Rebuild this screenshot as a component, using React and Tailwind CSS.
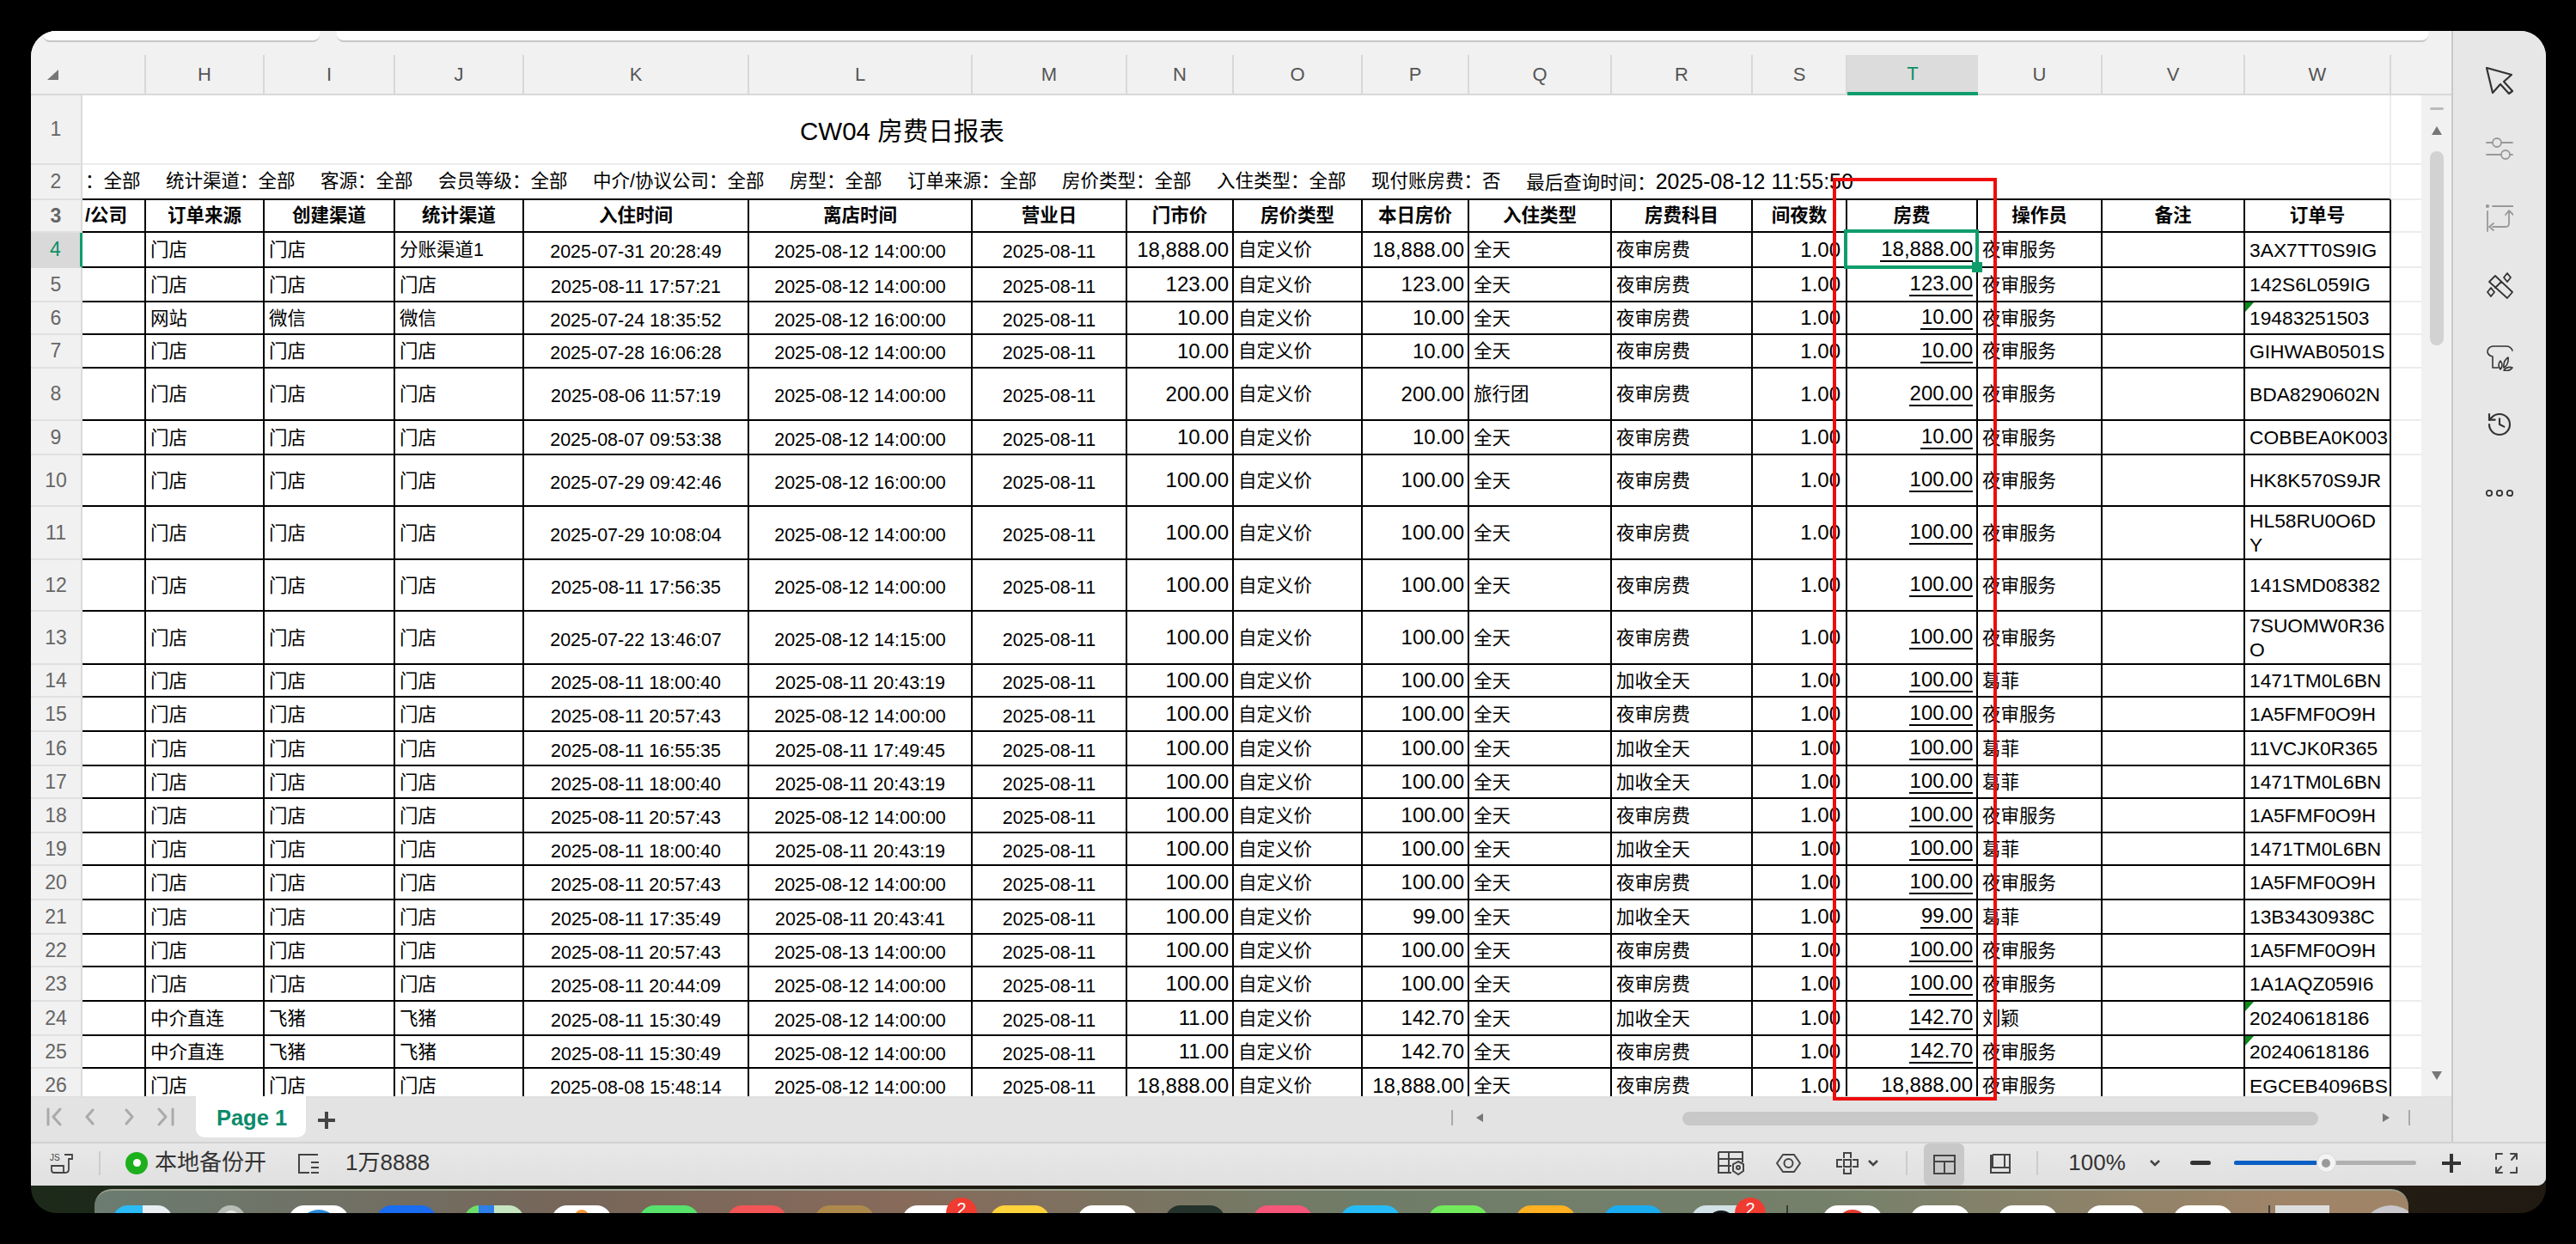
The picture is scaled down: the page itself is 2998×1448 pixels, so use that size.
import React from 'react';
import { History } from 'lucide-react';

const COLS = 'grid grid-cols-[60px_74px_138px_152px_150px_262px_260px_180px_124px_150px_124px_166px_164px_110px_152px_145px_166px_170px_35px]';
const LETTERS = ['H', 'I', 'J', 'K', 'L', 'M', 'N', 'O', 'P', 'Q', 'R', 'S', 'T', 'U', 'V', 'W'];
const TITLES = ['订单来源', '创建渠道', '统计渠道', '入住时间', '离店时间', '营业日', '门市价', '房价类型', '本日房价', '入住类型', '房费科目', '间夜数', '房费', '操作员', '备注', '订单号'];

const FILTERS = ['统计渠道：全部', '客源：全部', '会员等级：全部', '中介/协议公司：全部', '房型：全部', '订单来源：全部', '房价类型：全部', '入住类型：全部', '现付账房费：否'];

const NIGHT = ['全天', '夜审房费', '夜审服务'];
const EXTRA = ['全天', '加收全天', '葛菲'];
const SHOP = ['门店', '门店', '门店'];

// n, height, [source, created, channel], in, out, market, day, [stay, item, operator], order no, flagged
const ROWS = [
  [4, 'h-[41px]', ['门店', '门店', '分账渠道1'], '2025-07-31 20:28:49', '2025-08-12 14:00:00', '18,888.00', '18,888.00', NIGHT, '3AX7TT0S9IG'],
  [5, 'h-[40px]', SHOP, '2025-08-11 17:57:21', '2025-08-12 14:00:00', '123.00', '123.00', NIGHT, '142S6L059IG'],
  [6, 'h-[38px]', ['网站', '微信', '微信'], '2025-07-24 18:35:52', '2025-08-12 16:00:00', '10.00', '10.00', NIGHT, '19483251503', true],
  [7, 'h-[39px]', SHOP, '2025-07-28 16:06:28', '2025-08-12 14:00:00', '10.00', '10.00', NIGHT, 'GIHWAB0501S'],
  [8, 'h-[61px]', SHOP, '2025-08-06 11:57:19', '2025-08-12 14:00:00', '200.00', '200.00', ['旅行团', '夜审房费', '夜审服务'], 'BDA8290602N'],
  [9, 'h-[40px]', SHOP, '2025-08-07 09:53:38', '2025-08-12 14:00:00', '10.00', '10.00', NIGHT, 'COBBEA0K003'],
  [10, 'h-[60px]', SHOP, '2025-07-29 09:42:46', '2025-08-12 16:00:00', '100.00', '100.00', NIGHT, 'HK8K570S9JR'],
  [11, 'h-[62px]', SHOP, '2025-07-29 10:08:04', '2025-08-12 14:00:00', '100.00', '100.00', NIGHT, 'HL58RU0O6D\nY'],
  [12, 'h-[60px]', SHOP, '2025-08-11 17:56:35', '2025-08-12 14:00:00', '100.00', '100.00', NIGHT, '141SMD08382'],
  [13, 'h-[62px]', SHOP, '2025-07-22 13:46:07', '2025-08-12 14:15:00', '100.00', '100.00', NIGHT, '7SUOMW0R36\nO'],
  [14, 'h-[38px]', SHOP, '2025-08-11 18:00:40', '2025-08-11 20:43:19', '100.00', '100.00', EXTRA, '1471TM0L6BN'],
  [15, 'h-[40px]', SHOP, '2025-08-11 20:57:43', '2025-08-12 14:00:00', '100.00', '100.00', NIGHT, '1A5FMF0O9H'],
  [16, 'h-[40px]', SHOP, '2025-08-11 16:55:35', '2025-08-11 17:49:45', '100.00', '100.00', EXTRA, '11VCJK0R365'],
  [17, 'h-[38px]', SHOP, '2025-08-11 18:00:40', '2025-08-11 20:43:19', '100.00', '100.00', EXTRA, '1471TM0L6BN'],
  [18, 'h-[40px]', SHOP, '2025-08-11 20:57:43', '2025-08-12 14:00:00', '100.00', '100.00', NIGHT, '1A5FMF0O9H'],
  [19, 'h-[38px]', SHOP, '2025-08-11 18:00:40', '2025-08-11 20:43:19', '100.00', '100.00', EXTRA, '1471TM0L6BN'],
  [20, 'h-[40px]', SHOP, '2025-08-11 20:57:43', '2025-08-12 14:00:00', '100.00', '100.00', NIGHT, '1A5FMF0O9H'],
  [21, 'h-[40px]', SHOP, '2025-08-11 17:35:49', '2025-08-11 20:43:41', '100.00', '99.00', EXTRA, '13B3430938C'],
  [22, 'h-[38px]', SHOP, '2025-08-11 20:57:43', '2025-08-13 14:00:00', '100.00', '100.00', NIGHT, '1A5FMF0O9H'],
  [23, 'h-[40px]', SHOP, '2025-08-11 20:44:09', '2025-08-12 14:00:00', '100.00', '100.00', NIGHT, '1A1AQZ059I6'],
  [24, 'h-[40px]', ['中介直连', '飞猪', '飞猪'], '2025-08-11 15:30:49', '2025-08-12 14:00:00', '11.00', '142.70', ['全天', '加收全天', '刘颖'], '20240618186', true],
  [25, 'h-[38px]', ['中介直连', '飞猪', '飞猪'], '2025-08-11 15:30:49', '2025-08-12 14:00:00', '11.00', '142.70', NIGHT, '20240618186', true],
  [26, 'h-[41px]', SHOP, '2025-08-08 15:48:14', '2025-08-12 14:00:00', '18,888.00', '18,888.00', NIGHT, 'EGCEB4096BS'],
];

const DOCK = [
  ['w-[70px] bg-[linear-gradient(90deg,#2bbcf7_50%,#e8eef2_50%)]'],
  ['w-[35px] mx-[18px] bg-[#b9bdb8] rounded-t-full', 'bg-[#e5e5e0] w-[20px] h-[20px] mt-[6px]'],
  ['w-[70px] bg-white', 'bg-[#2a8ad8] w-[46px] h-[46px] mt-[5px]'],
  ['w-[70px] bg-[#1a6cf0]'],
  ['w-[70px] bg-[linear-gradient(90deg,#6fdc6a_25%,#2f7fe8_25%,#2f7fe8_50%,#c6e4c0_50%)]'],
  ['w-[70px] bg-white', 'bg-[#f29a3c] w-[16px] h-[30px] mt-[5px]'],
  ['w-[70px] bg-[#57e26c]'],
  ['w-[70px] bg-[#f25555]'],
  ['w-[70px] bg-[#ad8a4c]'],
  ['w-[70px] bg-white'],
  ['w-[70px] bg-[#fdd33c]'],
  ['w-[70px] bg-white'],
  ['w-[70px] bg-[#24322c]'],
  ['w-[70px] bg-[#f5567a]'],
  ['w-[70px] bg-[#27bcf8]'],
  ['w-[70px] bg-[#72ea5c]'],
  ['w-[70px] bg-[#fdb022]'],
  ['w-[70px] bg-[#1cacf0]'],
  ['w-[70px] bg-[#d3e2e6]', 'bg-[#14181a] w-[34px] h-[34px] mt-[6px]'],
];
const DOCK_RIGHT = [
  ['bg-white', 'bg-[#e23b30] w-[36px] h-[36px] mt-[5px]'],
  ['bg-white'],
  ['bg-white'],
  ['bg-white'],
  ['bg-white'],
];

const cell = 'flex items-center border-r-2 border-b-2 border-black overflow-hidden whitespace-nowrap';
const left = `${cell} pl-[5px] pt-[1px] leading-[24px]`;
const center = `${cell} justify-center pt-[5px] leading-[22px]`;
const right = `${cell} justify-end pr-[4px] text-[24px] leading-[24px]`;
const nights = `${cell} justify-end pr-[6px] text-[24px] leading-[24px]`;

const RowHead = ({ n, active, className = '' }) => (
  <div className={`flex items-center justify-center border-b-2 text-[23px] ${active ? 'bg-[#d9d9d9] border-[#d9d9d9] border-r-[3px] border-r-[#0f9d6b] text-[#0f8f68]' : 'bg-[#f1f1f1] border-[#e0e0e0] border-r-2 border-r-[#dadada] text-[#666]'} ${className}`}>
    {n}
  </div>
);

const Row = ({ data }) => {
  const [n, h, [src, created, channel], inTime, outTime, market, day, [stay, item, operator], order, flag] = data;
  return (
    <div className={`${COLS} ${h}`}>
      <RowHead n={n} active={n === 4} />
      <div className={cell}></div>
      <div className={left}>{src}</div>
      <div className={left}>{created}</div>
      <div className={left}>{channel}</div>
      <div className={center}>{inTime}</div>
      <div className={center}>{outTime}</div>
      <div className={center}>2025-08-11</div>
      <div className={right}>{market}</div>
      <div className={left}>自定义价</div>
      <div className={right}>{day}</div>
      <div className={left}>{stay}</div>
      <div className={left}>{item}</div>
      <div className={nights}>1.00</div>
      <div className={`${right} relative overflow-visible`}>
        <span className="inline-block border-b-2 border-black leading-[26px] pl-[1px]">{day}</span>
        {n === 4 && (
          <>
            <div className="absolute -left-[4px] -top-[4px] -right-[3px] -bottom-[3px] border-4 border-[#0f9d6b] z-10"></div>
            <div className="absolute -right-[7px] -bottom-[7px] w-[12px] h-[12px] bg-[#0f9d6b] z-10"></div>
          </>
        )}
      </div>
      <div className={left}>{operator}</div>
      <div className={cell}></div>
      <div className={`${cell} relative pl-[5px] text-[22.8px] whitespace-pre-line leading-[28px]`}>
        {flag && <div className="absolute top-0 left-0 w-0 h-0 border-t-[11px] border-t-[#0a8a1a] border-r-[10px] border-r-transparent"></div>}
        {order}
      </div>
      <div className="border-b-2 border-[#ececec]"></div>
    </div>
  );
};

const Tri = ({ d, className }) => (
  <svg width="14" height="12" viewBox="0 0 14 12" className={className}><path d={d} fill="currentColor" /></svg>
);

const Side = ({ children }) => (
  <svg width="32" height="32" viewBox="0 0 32 32" fill="none" stroke="currentColor" strokeWidth="1.8" strokeLinecap="round" strokeLinejoin="round">
    {children}
  </svg>
);

const DockIcon = ({ item, wide }) => (
  <div className={`relative h-[70px] shrink-0 rounded-t-[18px] flex justify-center overflow-hidden ${wide ? 'w-[70px]' : ''} ${item[0]}`}>
    {item[1] && <div className={`rounded-full ${item[1]}`}></div>}
  </div>
);

const Badge = () => (
  <div className="absolute -right-[17px] -top-[9px] w-[36px] h-[36px] rounded-full bg-[#ef3b30] flex justify-center text-white text-[20px] leading-[26px]">2</div>
);

const App = () => (
  <div className="relative w-[2998px] h-[1448px] bg-black pt-[36px] pl-[36px] overflow-hidden font-['Liberation_Sans','Noto_Sans_CJK_SC',sans-serif] text-[21.5px] text-black">
    <div className="w-[2927px] h-[1376px] rounded-t-[30px] rounded-b-[30px] overflow-hidden bg-[linear-gradient(90deg,#1d2a1a,#1c1a12_30%,#2a2418_70%,#201a12)] flex flex-col">
      <div className="h-[1344px] shrink-0 rounded-br-[10px] overflow-hidden flex flex-col bg-[#e6e6e6]">
        <div className="flex flex-1 min-h-0">
          <div className="w-[2817px] flex flex-col bg-[#f1f1f1]">
            <div className="h-[28px] shrink-0 flex gap-[20px] pl-[14px]">
              <div className="w-[322px] h-[13px] bg-white rounded-b-[8px] border-b-2 border-[#c6c6c6]"></div>
              <div className="w-[2434px] h-[13px] bg-white rounded-b-[8px] border-b-2 border-[#c6c6c6]"></div>
            </div>

            <div className="flex flex-1 min-h-0">
              <div className="w-[2782px] flex flex-col">
                <div className={`${COLS} h-[47px] shrink-0 text-[22px] text-[#555] border-b-2 border-[#d8d8d8]`}>
                  <div className="flex items-center pl-[18px]">
                    <svg width="15" height="14" viewBox="0 0 15 14"><path d="M1 13 L14 1 V13 Z" fill="#777" /></svg>
                  </div>
                  <div className="border-r-2 border-[#d8d8d8]"></div>
                  {LETTERS.map(l => (
                    <div key={l} className={l === 'T' ? 'flex items-center justify-center bg-[#dcdcdc] text-[#0f8f68] border-b-4 border-[#0f9d6b] -mb-[2px]' : 'flex items-center justify-center border-r-2 border-[#d8d8d8]'}>{l}</div>
                  ))}
                  <div></div>
                </div>

                <div className="h-[1165px] overflow-hidden bg-white">
                  <div className="flex h-[81px]">
                    <RowHead n={1} className="w-[60px] shrink-0" />
                    <div className="w-[2687px] flex items-center pl-[835px] pt-[6px] text-[29.5px] border-r-2 border-b-2 border-[#ececec]">CW04 房费日报表</div>
                    <div className="flex-1 border-b-2 border-[#ececec]"></div>
                  </div>
                  <div className="flex h-[41px]">
                    <RowHead n={2} className="w-[60px] shrink-0" />
                    <div className="w-[2687px] flex items-center gap-[29.5px] pl-[3px] whitespace-nowrap overflow-hidden border-r-2 border-r-[#ececec] border-b-2 border-b-black">
                      <span>：全部</span>
                      {FILTERS.map(f => <span key={f}>{f}</span>)}
                      <span>最后查询时间：<span className="text-[25px]">2025-08-12 11:55:50</span></span>
                    </div>
                    <div className="flex-1 border-b-2 border-[#ececec]"></div>
                  </div>
                  <div className={`${COLS} h-[38px] font-bold`}>
                    <RowHead n={3} />
                    <div className={`${cell} justify-end pr-[20px]`}>/公司</div>
                    {TITLES.map(t => <div key={t} className={`${cell} justify-center`}>{t}</div>)}
                    <div className="border-b-2 border-[#ececec]"></div>
                  </div>
                  {ROWS.map(r => <Row key={r[0]} data={r} />)}
                </div>
              </div>

              <div className="w-[35px] flex flex-col items-center bg-[#f1f1f1]">
                <div className="w-full h-[47px] shrink-0 border-b-2 border-[#d8d8d8]"></div>
                <div className="w-[16px] h-[3px] mt-[14px] bg-[#bbb] rounded-full"></div>
                <Tri d="M7 1 L13 11 H1 Z" className="mt-[18px] text-[#777]" />
                <div className="w-[16px] h-[226px] mt-[18px] rounded-full bg-[#d2d2d2]"></div>
                <Tri d="M1 1 H13 L7 11 Z" className="mt-auto mb-[18px] text-[#777]" />
              </div>
            </div>

            <div className="h-[53px] shrink-0 flex items-start border-t-2 border-[#e0e0e0] bg-[#e3e3e3]">
              <div className="flex items-center h-[44px] pl-[18px] text-[#aaa]">
                <svg width="150" height="22" viewBox="0 0 150 22" fill="none" stroke="currentColor" strokeWidth="3" strokeLinecap="round" strokeLinejoin="round">
                  <path d="M2 2v18M16 2l-8 9 8 9M54 3l-7 8 7 8M93 3l7 8-7 8M131 2l8 9-8 9M147 2v18" />
                </svg>
              </div>
              <div className="ml-[24px] w-[128px] h-[48px] -mt-[2px] pt-[2px] pl-[2px] rounded-b-[10px] bg-white flex items-center justify-center font-bold text-[25.5px] text-[#0b8a6a]">Page 1</div>
              <div className="ml-[14px] mt-[16px] w-[20px] h-[20px] relative">
                <div className="absolute left-[8px] top-0 w-[4px] h-[20px] bg-[#444]"></div>
                <div className="absolute left-0 top-[8px] w-[20px] h-[4px] bg-[#444]"></div>
              </div>
              <div className="ml-[1299px] mt-[14px] w-[2px] h-[18px] bg-[#aaa]"></div>
              <Tri d="M11 1 V11 L3 6 Z" className="ml-[24px] mt-[17px] text-[#777]" />
              <div className="ml-[229px] mt-[16px] w-[740px] h-[16px] rounded-full bg-[#c8c8c8]"></div>
              <Tri d="M3 1 V11 L11 6 Z" className="ml-[72px] mt-[17px] text-[#777]" />
              <div className="ml-[19px] mt-[14px] w-[2px] h-[18px] bg-[#aaa]"></div>
            </div>
          </div>

          <div className="flex-1 border-l-2 border-[#c9c9c9] bg-[#e7e7e7] flex flex-col items-center text-[#333]">
            <div className="mt-[42px] h-[32px]">
              <Side><path d="M1 1 L30 9 L21 17 L31 28 L27 31 L17 20 L8 30 Z" strokeWidth="2.2" /></Side>
            </div>
            <div className="mt-[47px] h-[32px] text-[#999]">
              <Side><path d="M1 9h7M18 9h13M1 23h17M28 23h3" /><circle cx="13" cy="9" r="5" /><circle cx="23" cy="23" r="5" /></Side>
            </div>
            <div className="mt-[49px] h-[32px] text-[#999]">
              <Side><path d="M2 8v23M8 2h24M27 8v14q0 4-4 4H8M4 26l5-4M4 26l5 4M23 12l4-5 5 5" /><circle cx="2" cy="2" r="1.2" fill="currentColor" /></Side>
            </div>
            <div className="mt-[47px] h-[32px]">
              <Side><path d="M4 11 L11 4 L31 23 L25 30 ZM11 18l7-7M25 1l4 5-4 5-4-5ZM6 18l4 5-4 5-4-5Z" /></Side>
            </div>
            <div className="mt-[51px] h-[32px]">
              <Side><path d="M31 8 Q29 3 24 3 H8 Q2 4 2 10 Q3 14 8 15 V28 H14M17 30q-4-5 0-10q4 5 0 10ZM21 28q-1-8 5-12q1 8-5 12ZM21 31q4-5 10-3q-4 5-10 3Z" strokeWidth="1.6" /></Side>
            </div>
            <div className="mt-[46px] h-[32px]">
              <History size={32} strokeWidth={1.6} />
            </div>
            <div className="mt-[48px] h-[32px]">
              <Side><circle cx="4" cy="16" r="3.2" /><circle cx="16" cy="16" r="3.2" /><circle cx="28" cy="16" r="3.2" /></Side>
            </div>
          </div>
        </div>

        <div className="h-[51px] shrink-0 flex items-center pb-[4px] border-t-2 border-[#d2d2d2] bg-[linear-gradient(180deg,#e8e8e8,#e0e0e0)] text-[#333] text-[26px]">
          <svg width="28" height="24" viewBox="0 0 28 24" fill="none" stroke="#444" strokeWidth="1.8" className="ml-[22px]">
            <text x="0" y="9" fontSize="10" fill="#444" stroke="none">JS</text>
            <path d="M17 2h9v5h-4v12q0 4-4 4H5q-3 0-3-3v-5h14v8" />
          </svg>
          <div className="ml-[29px] w-[2px] h-[28px] bg-[#ccc]"></div>
          <div className="ml-[29px] w-[26px] h-[26px] rounded-full bg-[#1cb01c] flex items-center justify-center">
            <div className="w-[9px] h-[9px] rounded-full bg-white"></div>
          </div>
          <span className="ml-[8px]">本地备份开</span>
          <svg width="26" height="24" viewBox="0 0 26 24" fill="none" stroke="#444" strokeWidth="2" className="ml-[36px]">
            <path d="M24 2H2V23H14M16 11h9M16 17h9M16 23h9" />
          </svg>
          <span className="ml-[30px]">1万8888</span>

          <svg width="33" height="30" viewBox="0 0 33 30" fill="none" stroke="#444" strokeWidth="2" className="ml-[1498px]">
            <path d="M2 2H30V14M2 2V26H17M2 10H30M2 18H17M14 2V26" />
            <path d="M25 13l6 3v8l-6 4-6-4v-8Z" /><circle cx="25" cy="20" r="2" />
          </svg>
          <svg width="29" height="22" viewBox="0 0 29 22" fill="none" stroke="#444" strokeWidth="2" strokeLinejoin="round" className="ml-[36px]">
            <path d="M1 11 L8 1 H21 L28 11 L21 21 H8 Z" /><circle cx="14.5" cy="11" r="5" />
          </svg>
          <svg width="26" height="26" viewBox="0 0 26 26" fill="none" stroke="#444" strokeWidth="2" className="ml-[41px]">
            <path d="M9 7V1h8v6M9 19v6h8v-6M7 9H1v8h6M19 9h6v8h-6M9 9h8v8H9Z" />
          </svg>
          <svg width="12" height="8" viewBox="0 0 12 8" fill="none" stroke="#444" strokeWidth="2.5" className="ml-[11px]"><path d="M1 1l5 5 5-5" /></svg>
          <div className="ml-[32px] w-[2px] h-[28px] bg-[#ccc]"></div>
          <div className="ml-[19px] w-[47px] h-[49px] -mb-[4px] rounded-[6px] bg-[#c8c8c8] flex items-center justify-center">
            <svg width="26" height="23" viewBox="0 0 26 23" fill="none" stroke="#444" strokeWidth="2"><path d="M1 1H25V22H1ZM1 8H25M13 8V22" /></svg>
          </div>
          <svg width="26" height="24" viewBox="0 0 26 24" fill="none" stroke="#444" strokeWidth="2" className="ml-[29px]">
            <path d="M4 2H24V23H2V2M4 2V17H24M18 2V17" />
          </svg>
          <div className="ml-[29px] w-[2px] h-[28px] bg-[#ccc]"></div>
          <span className="ml-[35px]">100%</span>
          <svg width="12" height="8" viewBox="0 0 12 8" fill="none" stroke="#444" strokeWidth="2.5" className="ml-[28px]"><path d="M1 1l5 5 5-5" /></svg>
          <div className="ml-[35px] w-[24px] h-[5px] rounded-full bg-[#333]"></div>
          <div className="ml-[27px] relative w-[212px] h-[5px] rounded-full bg-[#b0b0b0]">
            <div className="w-[97px] h-full rounded-full bg-[#0a5fc4]"></div>
            <div className="absolute left-[96px] -top-[9px] w-[23px] h-[23px] rounded-full bg-[#f3f3f3] border border-[#d8d8d8] flex items-center justify-center">
              <div className="w-[10px] h-[10px] rounded-full bg-[#999]"></div>
            </div>
          </div>
          <div className="ml-[30px] relative w-[22px] h-[22px]">
            <div className="absolute left-[9px] top-0 w-[4px] h-[22px] bg-[#333]"></div>
            <div className="absolute left-0 top-[9px] w-[22px] h-[4px] bg-[#333]"></div>
          </div>
          <svg width="28" height="26" viewBox="0 0 28 26" fill="none" stroke="#444" strokeWidth="2" strokeLinecap="round" strokeLinejoin="round" className="ml-[39px]">
            <path d="M2 8V2H9M19 2H26V8M2 18V24H9M19 24H26V18M26 2L20 9M2 24L8 17" />
          </svg>
        </div>
      </div>

      <div className="mt-[4px] ml-[74px] w-[2693px] h-[30px] shrink-0 rounded-t-[20px] border-t-2 border-[#9aa08e] bg-[linear-gradient(90deg,#6b7c70,#76665a_20%,#876a5a_35%,#6f7d68_55%,#75806b_75%,#a08468_95%)] flex gap-[32px] pl-[21px] pt-[17px] overflow-hidden">
        {DOCK.map((d, i) => (
          <div key={i} className="relative shrink-0">
            <DockIcon item={d} />
            {(i === 9 || i === 18) && <Badge />}
          </div>
        ))}
        <div className="w-[2px] h-[10px] shrink-0 ml-[9px] -mr-[27px] bg-[#3b3b3b]"></div>
        <div className="w-[3px] shrink-0"></div>
        {DOCK_RIGHT.map((d, i) => <DockIcon key={i} item={d} wide />)}
        <div className="w-[2px] h-[10px] shrink-0 ml-[9px] -mr-[26px] bg-[#3b3b3b]"></div>
        <div className="w-[63px] h-[70px] shrink-0 bg-[#dedede]"></div>
        <div className="w-[69px] h-[70px] shrink-0 rounded-t-full bg-[#c9c6cc] ml-[5px]"></div>
      </div>
    </div>

    <div className="absolute left-[2133px] top-[207px] w-[191px] h-[1074px] border-4 border-[#ee0c0c] z-20"></div>
  </div>
);

export default App;
